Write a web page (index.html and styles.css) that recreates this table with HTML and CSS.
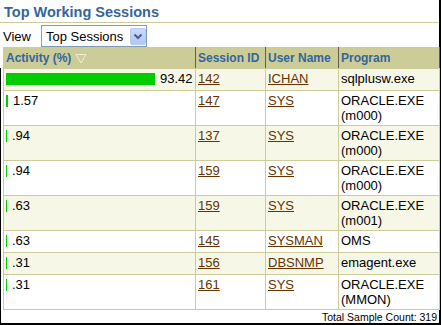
FILE: index.html
```html
<!DOCTYPE html>
<html>
<head>
<meta charset="utf-8">
<link rel="stylesheet" href="styles.css">
</head>
<body>
<div class="page">
  <h1 class="title">Top Working Sessions</h1>
  <div class="viewbar">
    <span class="view-label">View</span>
    <div class="select">
      <span class="select-text">Top Sessions</span>
      <span class="select-btn"><svg width="14" height="15" viewBox="0 0 14 15"><polyline points="3.5,5.5 7,9 10.5,5.5" fill="none" stroke="#4a5f88" stroke-width="2"/></svg></span>
    </div>
  </div>
  <table class="sessions">
    <colgroup>
      <col class="c-act"><col class="c-sid"><col class="c-user"><col class="c-prog">
    </colgroup>
    <thead>
      <tr>
        <th><span class="th-sort">Activity (%)<svg class="sort-icon" width="12" height="11" viewBox="0 0 12 11"><polygon points="1,1.5 11,1.5 6,10" fill="none" stroke="#eeeed2" stroke-width="1"/></svg></span></th>
        <th>Session ID</th>
        <th>User Name</th>
        <th>Program</th>
      </tr>
    </thead>
    <tbody>
      <tr class="odd">
        <td><div class="act"><span class="bar" style="width:149px"></span><span>93.42</span></div></td>
        <td><a href="#">142</a></td>
        <td><a href="#">ICHAN</a></td>
        <td>sqlplusw.exe</td>
      </tr>
      <tr>
        <td><div class="act"><span class="bar" style="width:2px"></span><span>1.57</span></div></td>
        <td><a href="#">147</a></td>
        <td><a href="#">SYS</a></td>
        <td>ORACLE.EXE (m000)</td>
      </tr>
      <tr class="odd">
        <td><div class="act"><span class="bar" style="width:1px"></span><span>.94</span></div></td>
        <td><a href="#">137</a></td>
        <td><a href="#">SYS</a></td>
        <td>ORACLE.EXE (m000)</td>
      </tr>
      <tr>
        <td><div class="act"><span class="bar" style="width:1px"></span><span>.94</span></div></td>
        <td><a href="#">159</a></td>
        <td><a href="#">SYS</a></td>
        <td>ORACLE.EXE (m000)</td>
      </tr>
      <tr class="odd">
        <td><div class="act"><span class="bar" style="width:1px"></span><span>.63</span></div></td>
        <td><a href="#">159</a></td>
        <td><a href="#">SYS</a></td>
        <td>ORACLE.EXE (m001)</td>
      </tr>
      <tr>
        <td><div class="act"><span class="bar" style="width:1px"></span><span>.63</span></div></td>
        <td><a href="#">145</a></td>
        <td><a href="#">SYSMAN</a></td>
        <td>OMS</td>
      </tr>
      <tr class="odd">
        <td><div class="act"><span class="bar" style="width:1px"></span><span>.31</span></div></td>
        <td><a href="#">156</a></td>
        <td><a href="#">DBSNMP</a></td>
        <td>emagent.exe</td>
      </tr>
      <tr>
        <td><div class="act"><span class="bar" style="width:1px"></span><span>.31</span></div></td>
        <td><a href="#">161</a></td>
        <td><a href="#">SYS</a></td>
        <td>ORACLE.EXE (MMON)</td>
      </tr>
    </tbody>
  </table>
  <div class="total">Total Sample Count: 319</div>
</div>
</body>
</html>
```
FILE: styles.css
```css
html, body {
  margin: 0;
  padding: 0;
  background: #ffffff;
}
body {
  font-family: "Liberation Sans", Arial, sans-serif;
  font-size: 13px;
  color: #000;
}
.page {
  position: relative;
  width: 441px;
  height: 325px;
  box-sizing: border-box;
  border-right: 2px solid #000;
  border-bottom: 2px solid #000;
}
.page::before {
  content: "";
  position: absolute;
  left: 0;
  top: 68px;
  bottom: 0;
  width: 1px;
  background: #000;
}
.title {
  margin: 0;
  height: 19px;
  padding: 3px 0 0 4px;
  font-size: 14.5px;
  line-height: 19px;
  font-weight: bold;
  color: #336699;
  border-bottom: 1px solid #cccc99;
}
.viewbar {
  display: flex;
  align-items: center;
  padding-top: 2px;
  height: 22px;
}
.view-label {
  width: 38px;
  padding-left: 3px;
  line-height: 15px;
}
.select {
  width: 106px;
  height: 22px;
  box-sizing: border-box;
  border: 1px solid #7f9db9;
  display: flex;
  align-items: center;
  padding-left: 4px;
}
.select-text {
  line-height: 15px;
  flex: 1;
}
.select-btn {
  align-self: flex-start;
  margin-top: 2px;
  width: 16px;
  height: 17px;
  box-sizing: border-box;
  border: 1px solid #b9cbf3;
  border-radius: 2px;
  background: linear-gradient(#cad9fe, #b3c7f6);
  display: flex;
  align-items: center;
  justify-content: center;
}
.select-btn svg { display: block; }
.sessions {
  margin-left: 3px;
  border-collapse: collapse;
  table-layout: fixed;
  width: 436px;
}
.c-act { width: 192px; }
.c-sid { width: 70px; }
.c-user { width: 73px; }
.c-prog { width: 101px; }
.sessions th {
  background: #cccc99;
  color: #336699;
  font-size: 12px;
  font-weight: bold;
  text-align: left;
  line-height: 15px;
  padding: 3px 2px 2px;
  border: 1px solid #cccc99;
  border-right-color: #5f5f4f;
  white-space: nowrap;
}
.th-sort {
  display: inline-flex;
  align-items: center;
  gap: 4px;
}
.sort-icon { display: block; }
.sessions td {
  border: 1px solid #cccc99;
  padding: 2px 2px;
  line-height: 15px;
  vertical-align: top;
  background: #ffffff;
}
.sessions tr.odd td {
  background: #f7f7e7;
}
.sessions a {
  color: #663300;
  text-decoration: underline;
}
.act {
  display: flex;
  align-items: flex-start;
  gap: 5px;
  height: 17px;
}
.bar {
  display: block;
  height: 12px;
  margin-top: 2px;
  background: #00cc00;
}
.total {
  text-align: right;
  font-size: 10.5px;
  line-height: 13px;
  padding: 1px 2px 0 0;
}
```
